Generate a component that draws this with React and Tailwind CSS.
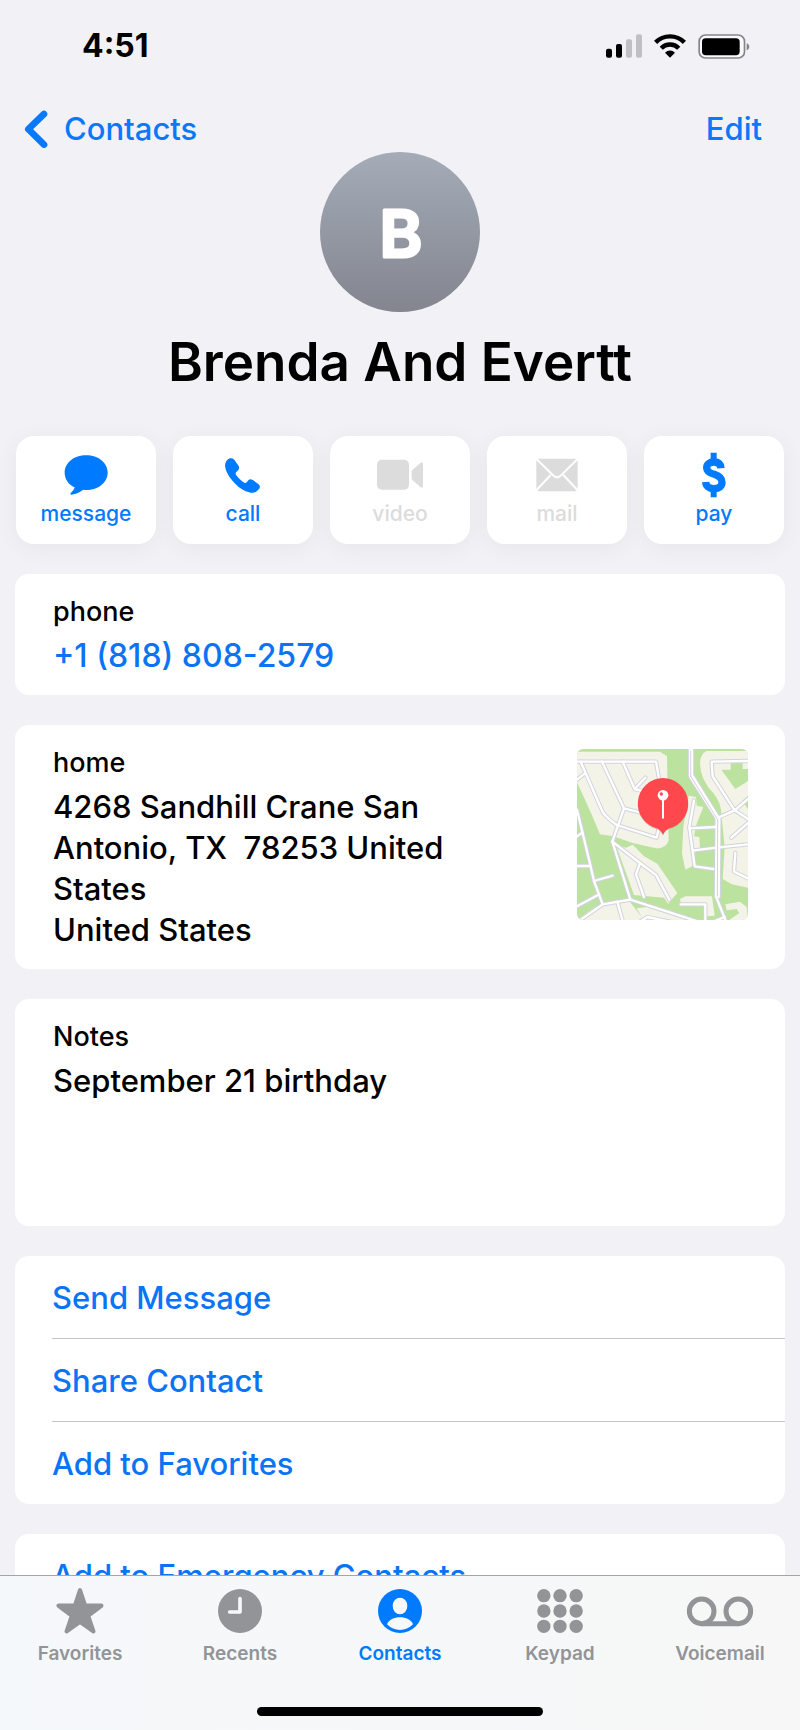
import React, { useState } from 'react';

const SignalIcon = () => (
  <svg viewBox="618 101 108 70" className="w-9 h-6" aria-hidden="true">
    <rect x="618" y="144" width="18" height="27" rx="6" fill="#000" />
    <rect x="648" y="130" width="18" height="41" rx="6" fill="#000" />
    <rect x="678" y="116" width="18" height="55" rx="6" fill="#bfbfc4" />
    <rect x="708" y="101" width="18" height="70" rx="6" fill="#bfbfc4" />
  </svg>
);

const WifiIcon = () => (
  <svg viewBox="764 100 93 70" className="w-8 h-6" aria-hidden="true">
    <g fill="none" stroke="#000" strokeWidth="13">
      <path d="M768.5 124.5 A59 59 0 0 1 852.5 124.5" />
      <path d="M785 141.500 A36 36 0 0 1 836 141.500" />
    </g>
    <path d="M810.500 169 L796 154.500 A20 20 0 0 1 825 154.500 Z" fill="#000" />
  </svg>
);

const BatteryIcon = () => (
  <svg viewBox="893 98 156 74" className="w-[52px] h-[25px]" aria-hidden="true">
    <rect x="896.500" y="100.500" width="136" height="69" rx="19" fill="#fafafc" stroke="#85858a" strokeWidth="5" />
    <rect x="905" y="110" width="113" height="51" rx="11" fill="#000" />
    <path d="M1039 125 C1044 127 1047 131 1047 135.500 C1047 140 1044 144 1039 146 Z" fill="#85858a" />
  </svg>
);

const BackIcon = () => (
  <svg viewBox="72 330 72 114" className="w-6 h-[38px]" fill="none" stroke="currentColor" strokeWidth="20" strokeLinecap="round" strokeLinejoin="round" aria-hidden="true">
    <path d="M132 342 L85 387.500 L132 434" />
  </svg>
);

const MessageIcon = () => (
  <svg viewBox="187 97 138 138" className="size-[46px]" fill="currentColor" aria-hidden="true">
    <path d="M256.500 107 C293 107 321 129 321 159 C321 188 293 211 256.500 211 C253 211 250 211 247 210.500 C238 218 226 224 213 225 C209 225 208 221 211 219 C217 214 221 208 222 203 C203 194 192 178 192 159 C192 129 220 107 256.500 107 Z" />
  </svg>
);

const CallIcon = () => (
  <svg viewBox="660 97 138 138" className="size-[46px]" fill="currentColor" aria-hidden="true">
    <path d="M690 116 C697 114 702 118 705 123 L716 139 C719 145 717 149 713 153 L708 158 C706 161 707 164 709 167 C716 177 724 184 733 189 C736 191 738 190 740 188 L745 182 C749 178 753 178 758 181 L774 192 C781 197 781 203 777 208 C770 217 762 221 752 219 C732 216 712 201 698 184 C684 167 676 151 675 138 C675 128 681 119 690 116 Z" />
  </svg>
);

const VideoIcon = () => (
  <svg viewBox="1134 97 138 138" className="size-[46px]" fill="currentColor" aria-hidden="true">
    <rect x="1134" y="120" width="96" height="90" rx="15" />
    <path d="M1241 150 L1264 130 C1267 127 1272 128 1272 133 V199 C1272 204 1267 205 1264 202 L1241 182 Q1238 180 1238 176 V156 Q1238 152 1241 150 Z" />
  </svg>
);

const MailIcon = () => (
  <svg viewBox="401 97 138 138" className="size-[46px]" aria-hidden="true">
    <rect x="408" y="117" width="124" height="98" rx="7" fill="currentColor" />
    <g fill="none" stroke="#fff" strokeWidth="6">
      <path d="M406 116 L458 167 Q470 179 482 167 L534 116" />
      <path d="M406 214 L451 166 M534 214 L489 166" />
    </g>
  </svg>
);

const PayIcon = () => (
  <svg viewBox="-34 -2 138 138" className="size-[46px]" aria-hidden="true">
    <path d="M25 0 H43 V22 H25 Z M25 112 H43 V134 H25 Z" fill="currentColor" />
    <path d="M56 47 C55 34 47 28 35 28 C21 28 13 35 13 45 C13 57 22 61 36 65 C51 70 59 77 59 89 C59 101 50 108 35 108 C20 108 11 101 10 88" fill="none" stroke="currentColor" strokeWidth="22" />
  </svg>
);

const StarIcon = () => (
  <svg viewBox="165 229 150 138" className="w-[50px] h-[46px]" fill="currentColor" stroke="currentColor" strokeWidth="13" strokeLinejoin="round" aria-hidden="true">
    <path d="M240 236 L255 282 L304 282 L264 312 L280 359 L240 330 L200 359 L216 312 L176 282 L225 282 Z" />
  </svg>
);

const ClockIcon = () => (
  <svg viewBox="648 234 138 138" className="size-[46px]" aria-hidden="true">
    <circle cx="717" cy="303" r="66" fill="currentColor" />
    <path d="M717 266 V306 H686" fill="none" stroke="#f7f8f9" strokeWidth="11" strokeLinecap="round" strokeLinejoin="round" />
  </svg>
);

const PersonIcon = () => (
  <svg viewBox="-69 -69 138 138" className="size-[46px]" aria-hidden="true">
    <circle r="66" fill="currentColor" />
    <g fill="#f7f8f9">
      <ellipse cy="-15" rx="22" ry="25" />
      <path d="M-39 40 C-33 26 -18 19 0 19 C18 19 33 26 39 40 C28 51 14 57 0 57 C-14 57 -28 51 -39 40 Z" />
    </g>
  </svg>
);

const KeypadIcon = () => (
  <svg viewBox="407 234 138 138" className="size-[46px]" fill="currentColor" aria-hidden="true">
    {[257, 303, 349].map(cy =>
      [427.5, 476, 524.5].map(cx => <circle key={`${cx}-${cy}`} cx={cx} cy={cy} r="20" />)
    )}
  </svg>
);

const VoicemailIcon = () => (
  <svg viewBox="857 234 204 138" className="w-[68px] h-[46px]" fill="none" stroke="currentColor" strokeWidth="15" aria-hidden="true">
    <circle cx="904" cy="304" r="37" />
    <circle cx="1014" cy="304" r="37" />
    <path d="M904 341 H1014" />
  </svg>
);

const roads = [
  'M51 94 H288 L298 150',
  'M62 94 L128 245 Q140 262 170 284 L290 322 L296 296',
  'M126 94 L192 234 L240 246',
  'M188 94 L224 176 L256 142 M224 176 L246 182',
  'M51 148 L74 130',
  'M192 234 L157 334 L211 508',
  'M157 334 L240 398 L288 434 L328 508',
  'M240 398 L228 432 L252 500',
  'M51 238 L90 400 L102 452 L128 522',
  'M51 318 L68 306 M51 407 H92 M102 452 L158 436 M51 528 L114 494',
  'M51 576 L128 522 L211 508 L415 574',
  'M172 514 L188 572',
  'M240 574 L262 560 L330 574',
  'M390 56 L390 138 L470 264 L468 498 L498 574',
  'M470 264 L524 240 L564 266 M524 240 L564 206',
  'M564 92 L455 94 L458 138 L524 240',
  'M564 278 L514 322',
  'M402 210 L388 290 L404 408 L460 416',
  'M388 294 L466 290 M402 360 L470 352 L564 342',
  'M526 368 L522 424 L564 444',
  'M362 522 H436 V574',
  'M460 574 L494 560'
];

const MapThumbnail = () => (
  <svg viewBox="51 56 513 513" className="size-[171px] shrink-0 rounded-md" role="img" aria-label="Map of home address">
    <rect x="51" y="56" width="513" height="513" fill="#bce2a0" />
    <g fill="#f4f3e8">
      <path d="M51 64 H300 L321 78 L326 330 Q318 356 288 354 L218 338 L160 318 L120 312 L94 250 L51 156 Z" />
      <path d="M168 344 L198 352 L218 343 L252 378 L292 400 L352 488 L324 520 L312 502 L222 494 Z" />
      <path d="M51 569 L108 528 L208 512 L252 569 Z" />
      <path d="M230 534 L262 530 L380 569 H250 Z" />
      <path d="M564 62 H440 Q420 70 420 100 Q422 150 460 188 Q484 218 484 250 L494 350 L488 446 L516 462 L564 472 Z" />
      <path d="M386 196 L408 200 L410 226 L430 230 L410 280 L402 318 L418 320 L420 352 L402 372 L396 408 L376 418 L366 370 L370 290 Z" />
      <path d="M360 506 L376 498 L456 498 L464 556 L440 558 L430 524 H364 Z" />
      <path d="M496 522 L540 514 L560 530 L564 569 H508 L538 548 L530 536 L500 540 Z" />
    </g>
    <g fill="#bce2a0">
      <path d="M484 118 H512 V98 H548 V116 H564 V152 L526 176 Z" />
      <path d="M546 212 L564 196 V236 Z" />
    </g>
    <g fill="none" strokeLinejoin="round" strokeLinecap="round">
      {roads.map(d => <path key={d} d={d} stroke="#d2d3de" strokeWidth="13" />)}
      <path d="M396 56 V134 L476 266 V500" stroke="#d2d3de" strokeWidth="14" />
      {roads.map(d => <path key={d} d={d} stroke="#fff" strokeWidth="7" />)}
      <path d="M396 56 V134 L478 266 L476 500" stroke="#fff" strokeWidth="7" />
      <path d="M392 62 V138 L473 268 L472 496" stroke="#d2d3de" strokeWidth="3" />
    </g>
    <path d="M309 146 A77 77 0 0 1 325 298 Q315 302 309 316 Q303 302 293 298 A77 77 0 0 1 309 146 Z" fill="#8d9a80" opacity="0.35" />
    <path d="M309 143 A77 77 0 0 1 325 295 Q315 299 309 313 Q303 299 293 295 A77 77 0 0 1 309 143 Z" fill="#ff484e" />
    <path d="M309 205 V262" stroke="#fff" strokeWidth="6" strokeLinecap="round" />
    <circle cx="309" cy="195" r="16" fill="#fff" />
    <circle cx="304" cy="191" r="5" fill="#ff484e" />
  </svg>
);

const actions = [
  { label: 'message', icon: MessageIcon },
  { label: 'call', icon: CallIcon },
  { label: 'video', icon: VideoIcon, disabled: true },
  { label: 'mail', icon: MailIcon, disabled: true },
  { label: 'pay', icon: PayIcon }
];

const tabs = [
  { label: 'Favorites', icon: StarIcon },
  { label: 'Recents', icon: ClockIcon },
  { label: 'Contacts', icon: PersonIcon },
  { label: 'Keypad', icon: KeypadIcon },
  { label: 'Voicemail', icon: VoicemailIcon }
];

const Card = ({ children, className = '' }) => (
  <section className={`bg-white rounded-[14px] pl-[38px] pr-[37px] pt-[21px] pb-[19px] ${className}`}>
    {children}
  </section>
);

const CardLabel = ({ children }) => (
  <h2 className="mb-1.5 text-[27px] leading-[34px] font-medium">{children}</h2>
);

const LinkList = ({ items }) => (
  <ul className="bg-white rounded-[14px] pl-[37px]">
    {items.map(item => (
      <li key={item} className="border-b border-[#c6c6c8] last:border-b-0">
        <button type="button" className="block w-full pt-[21px] pb-5 text-left text-[31px] leading-[41px] font-medium text-[#0a74f5]">
          {item}
        </button>
      </li>
    ))}
  </ul>
);

const App = () => {
  const [activeTab, setActiveTab] = useState('Contacts');

  return (
    <div className="h-screen flex flex-col overflow-hidden bg-[#f1f1f6] text-black font-['Inter','Liberation_Sans',sans-serif]">
      {/* Status bar */}
      <div className="flex items-center justify-between pt-[26px] pl-[82px] pr-[50px]">
        <span className="text-[32px] leading-[40px] font-bold">4:51</span>
        <div className="flex items-center gap-3">
          <SignalIcon />
          <WifiIcon />
          <BatteryIcon />
        </div>
      </div>

      {/* Navigation */}
      <nav className="mt-[42px] pl-6 pr-[38px] flex items-center justify-between text-[31px] leading-[41px] font-medium text-[#0a78fa]">
        <a href="#contacts" className="flex items-center gap-4">
          <BackIcon />
          Contacts
        </a>
        <button type="button">Edit</button>
      </nav>

      <main className="flex-1 min-h-0 overflow-y-auto [scrollbar-width:none] px-[15px] pt-[3px]">
        {/* Avatar and name */}
        <svg viewBox="0 0 160 160" className="block mx-auto size-40 rounded-full bg-linear-to-b from-[#a4acb8] to-[#83858f]" role="img" aria-label="B">
          <text x="81" y="105" textAnchor="middle" fontSize="65" fontWeight="600" fill="#fff" stroke="#fff" strokeWidth="3" strokeLinejoin="round">B</text>
        </svg>
        <h1 className="mt-[18px] text-center text-[53px] leading-[64px] font-semibold">Brenda And Evertt</h1>

        {/* Quick actions */}
        <div className="mt-[42px] px-px grid grid-cols-5 gap-[17px]">
          {actions.map(({ label, icon: Icon, disabled }) => (
            <button
              key={label}
              type="button"
              disabled={disabled}
              className={`flex flex-col items-center gap-1 pt-4 pb-[18px] rounded-[18px] bg-white shadow-[0_4px_24px_rgba(0,0,0,0.05)] text-[21px] leading-[24px] font-medium ${
                disabled ? 'text-[#dcdcdc]' : 'text-[#007aff]'
              }`}
            >
              <Icon />
              {label}
            </button>
          ))}
        </div>

        {/* Contact details */}
        <div className="mt-[30px] flex flex-col gap-[30px] pb-[30px]">
          <Card>
            <CardLabel>phone</CardLabel>
            <a href="tel:+18188082579" className="block text-[32px] leading-[41px] font-medium text-[#0a74f5]">
              +1 (818) 808-2579
            </a>
          </Card>

          <Card className="flex items-start gap-16">
            <div className="flex-1">
              <CardLabel>home</CardLabel>
              <address className="not-italic whitespace-pre-wrap text-[31px] leading-[41px] font-medium">
                {'4268 Sandhill Crane San Antonio, TX  78253 United States\nUnited States'}
              </address>
            </div>
            <div className="pt-[3px]">
              <MapThumbnail />
            </div>
          </Card>

          <Card className="min-h-[227px]">
            <CardLabel>Notes</CardLabel>
            <p className="text-[31px] leading-[41px] font-medium">September 21 birthday</p>
          </Card>

          <LinkList items={['Send Message', 'Share Contact', 'Add to Favorites']} />
          <LinkList items={['Add to Emergency Contacts']} />
        </div>
      </main>

      {/* Tab bar */}
      <footer className="border-t border-[#a5a5a8] bg-linear-to-r from-[#f5f8fa] to-[#f7f7f7]">
        <div className="pt-3 grid grid-cols-5">
          {tabs.map(({ label, icon: Icon }) => (
            <button
              key={label}
              type="button"
              onClick={() => setActiveTab(label)}
              className={`flex flex-col items-center gap-2 text-[19px] leading-[24px] font-semibold ${
                activeTab === label ? 'text-[#007aff]' : 'text-[#929497]'
              }`}
            >
              <Icon />
              {label}
            </button>
          ))}
        </div>
        <div className="mt-[41px] mb-[14px] mx-auto w-[286px] h-[9px] rounded-full bg-black" />
      </footer>
    </div>
  );
};

export default App;
